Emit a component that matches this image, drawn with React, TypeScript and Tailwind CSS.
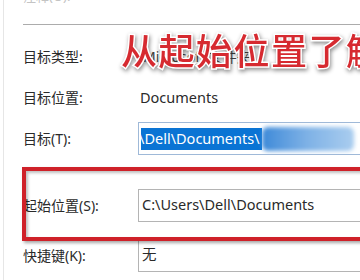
import React from 'react';

const font = { fontFamily: '"Noto Sans", "Noto Sans CJK SC", sans-serif' };

function Field({ children }: { children: React.ReactNode }) {
  return (
    <div className="flex h-[33px] w-[240px] shrink-0 items-center overflow-hidden border border-[#b4b4b4] bg-white pl-[3px] text-[14.5px] text-[#2a2a2a]">
      {children}
    </div>
  );
}

function Row({ label, children, h = 'h-[41px]' }: { label: string; children: React.ReactNode; h?: string }) {
  return (
    <div className={`flex items-center ${h}`}>
      <div className="w-[115px] shrink-0 text-[14px] text-[#2a2a2a]">{label}</div>
      {children}
    </div>
  );
}

export default function App() {
  return (
    <div className="relative h-[280px] w-[360px] overflow-hidden bg-white" style={font}>
      <div className="flex h-full">
        <div className="ml-[3px] w-[1px] shrink-0 bg-[#e6e6e6]" />
        <div className="flex-1 pl-[19px]">
          <div className="h-[24px] overflow-hidden">
            <div className="-mt-[13px] text-[13px] text-[#c4c4c4]">注释(O):</div>
          </div>
          <div className="border-t border-[#acacac]" />
          <div className="h-[11px]" />
          <Row label="目标类型:">
            <div className="pl-[5px] text-[14px] text-[#444]">Microsoft 文件夹</div>
          </Row>
          <Row label="目标位置:">
            <div className="pl-[2px] text-[14.5px] text-[#2a2a2a]">Documents</div>
          </Row>
          <Row label="目标(T):">
            <div className="flex h-[33px] w-[240px] shrink-0 items-center overflow-hidden border border-[#9fb9d8] bg-white pl-[2px]">
              <div className="flex h-[22px] items-center bg-[#0a74d4] pr-[2px] text-[14.5px] text-white">
                <span className="-ml-[2px]">\Dell\Documents\</span>
              </div>
              <div className="h-[24px] w-[92px] rounded-[6px] bg-gradient-to-r from-[#3d8ad8] via-[#7fb2e6] to-[#aacdef] blur-[2px]" />
            </div>
          </Row>
          <div className="h-[26px]" />
          <Row label="起始位置(S):" h="h-[40px]">
            <Field>C:\Users\Dell\Documents</Field>
          </Row>
          <div className="h-[10px]" />
          <Row label="快捷键(K):" h="h-[40px]">
            <Field>无</Field>
          </Row>
        </div>
      </div>

      {/* red annotation box */}
      <div className="absolute left-[22px] top-[167px] h-[74px] w-[360px] border-[4px] border-[#cf2129] shadow-[2px_2px_3px_rgba(0,0,0,0.35),inset_2px_2px_3px_rgba(0,0,0,0.25)]" />

      {/* overlaid caption */}
      <div
        className="absolute left-[121px] top-[27px] whitespace-nowrap text-[36px] font-medium leading-[44px] tracking-[1.5px] text-[#d62a30] [-webkit-text-stroke:3px_white] [paint-order:stroke_fill] drop-shadow-[1px_2px_2px_rgba(0,0,0,0.45)]"
        style={{ fontFamily: '"Noto Sans CJK SC", sans-serif' }}
      >
        从起始位置了解
      </div>
    </div>
  );
}
